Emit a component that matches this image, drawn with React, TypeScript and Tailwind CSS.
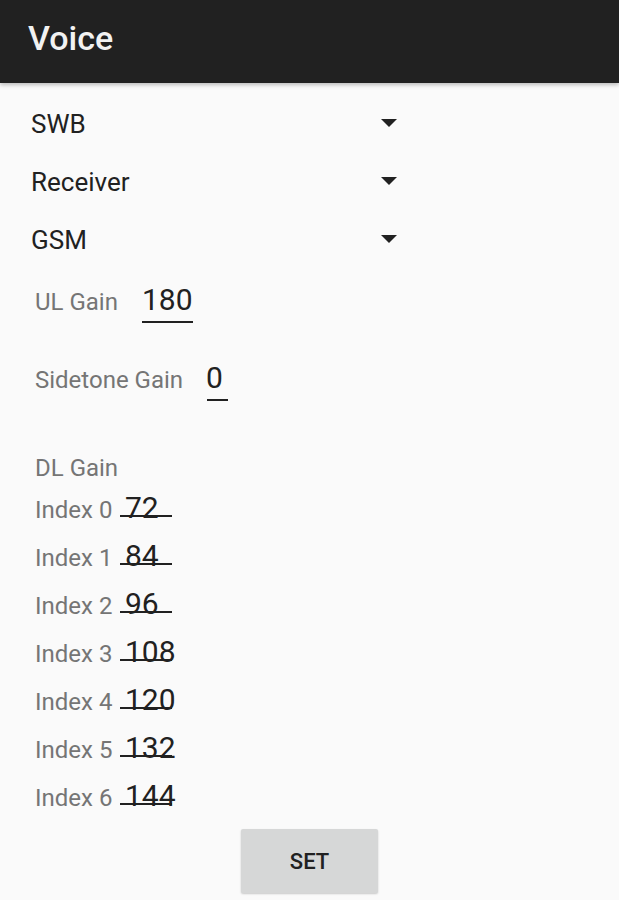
import React from "react";

function Spinner({ label }: { label: string }) {
  return (
    <div className="flex h-[58px] w-[397px] items-center pl-[31px]">
      <span className="flex-1 text-[26px] leading-[58px] text-[#212121]">{label}</span>
      <svg width="16" height="8" viewBox="0 0 16 8" className="mt-[-2px]">
        <path d="M0 0 L16 0 L8 8 Z" fill="#212121" />
      </svg>
    </div>
  );
}

export default function App() {
  const indexes = ["72", "84", "96", "108", "120", "132", "144"];
  return (
    <div className="min-h-[900px] bg-[#fafafa] font-['Roboto',sans-serif]">
      <header className="relative z-10 h-[83px] bg-[#212121] pl-[28px] pt-[18px] shadow-[0_2px_4px_rgba(0,0,0,0.25)]">
        <h1 className="text-[34px] font-medium leading-[40px] text-[#f2f2f2]">Voice</h1>
      </header>

      <div className="mt-[12px]">
        <Spinner label="SWB" />
        <Spinner label="Receiver" />
        <Spinner label="GSM" />
      </div>

      <div className="mt-[11px] flex h-[44px] items-baseline pl-[35px]">
        <span className="w-[107px] text-[24px] leading-[40px] text-[#757575]">UL Gain</span>
        <div className="relative">
          <span className="text-[30px] leading-[40px] text-[#212121]">180</span>
          <span className="absolute left-0 top-[41px] h-[2px] w-[51px] bg-[#212121]" />
        </div>
      </div>

      <div className="mt-[34px] flex h-[44px] items-baseline pl-[35px]">
        <span className="w-[171px] text-[24px] leading-[40px] text-[#757575]">Sidetone Gain</span>
        <div className="relative">
          <span className="text-[30px] leading-[40px] text-[#212121]">0</span>
          <span className="absolute left-[1px] top-[41px] h-[2px] w-[21px] bg-[#212121]" />
        </div>
      </div>

      <div className="mt-[50px] pl-[35px] text-[24px] leading-[32px] text-[#757575]">DL Gain</div>

      <div>
        {indexes.map((v, i) => (
          <div key={i} className="flex h-[48px] items-baseline pl-[35px]">
            <span className="w-[85px] text-[24px] leading-[48px] text-[#757575]">Index {i}</span>
            <div className="relative w-[52px] pl-[5px]">
              <span className="text-[30px] leading-[48px] text-[#212121]">{v}</span>
              <span className="absolute left-0 top-[31px] h-[2px] w-[52px] bg-[#212121]" />
            </div>
          </div>
        ))}
      </div>

      <div className="mt-[9px] flex justify-center">
        <button className="h-[64px] w-[137px] rounded-[2px] bg-[#d6d7d7] text-[22px] font-medium text-[#212121] shadow-[0_1px_2px_rgba(0,0,0,0.2)]">
          SET
        </button>
      </div>
    </div>
  );
}
